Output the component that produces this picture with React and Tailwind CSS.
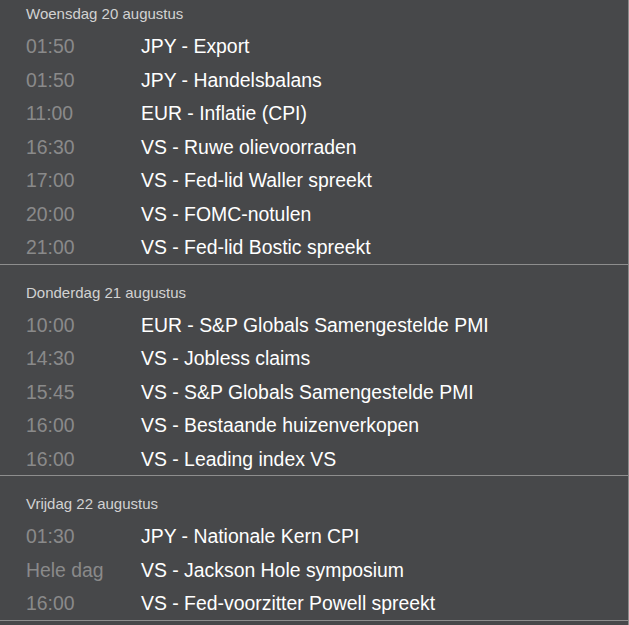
const days = [
  {
    label: 'Woensdag 20 augustus',
    events: [
      ['01:50', 'JPY - Export'],
      ['01:50', 'JPY - Handelsbalans'],
      ['11:00', 'EUR - Inflatie (CPI)'],
      ['16:30', 'VS - Ruwe olievoorraden'],
      ['17:00', 'VS - Fed-lid Waller spreekt'],
      ['20:00', 'VS - FOMC-notulen'],
      ['21:00', 'VS - Fed-lid Bostic spreekt'],
    ],
  },
  {
    label: 'Donderdag 21 augustus',
    events: [
      ['10:00', 'EUR - S&P Globals Samengestelde PMI'],
      ['14:30', 'VS - Jobless claims'],
      ['15:45', 'VS - S&P Globals Samengestelde PMI'],
      ['16:00', 'VS - Bestaande huizenverkopen'],
      ['16:00', 'VS - Leading index VS'],
    ],
  },
  {
    label: 'Vrijdag 22 augustus',
    events: [
      ['01:30', 'JPY - Nationale Kern CPI'],
      ['Hele dag', 'VS - Jackson Hole symposium'],
      ['16:00', 'VS - Fed-voorzitter Powell spreekt'],
    ],
  },
];

const App = () => {
  return (
    <div
      className="h-[625px] w-[629px] overflow-hidden bg-[#47484a] border-r border-[#8c8c8c]"
      style={{ fontFamily: '"Liberation Sans", Arial, sans-serif' }}
    >
      {/* list is scrolled a little, first day header sits near the top */}
      <div className="-mt-[14px]">
        {days.map((day) => (
          <section key={day.label} className="border-b border-[#8e8e8e] pt-[18px]">
            <h2 className="mb-[5px] pl-[26px] text-[15px] leading-[20px] text-[#d2d2d2]">{day.label}</h2>
            <ul>
              {day.events.map(([time, title], i) => (
                <li key={i} className="flex h-[33.5px] items-center pt-[2px] text-[19.4px] leading-none">
                  <span className="w-[141px] shrink-0 pl-[26px] text-[#8a8a8a]">{time}</span>
                  <span className="text-white">{title}</span>
                </li>
              ))}
            </ul>
          </section>
        ))}
      </div>
    </div>
  );
};

export default App;
